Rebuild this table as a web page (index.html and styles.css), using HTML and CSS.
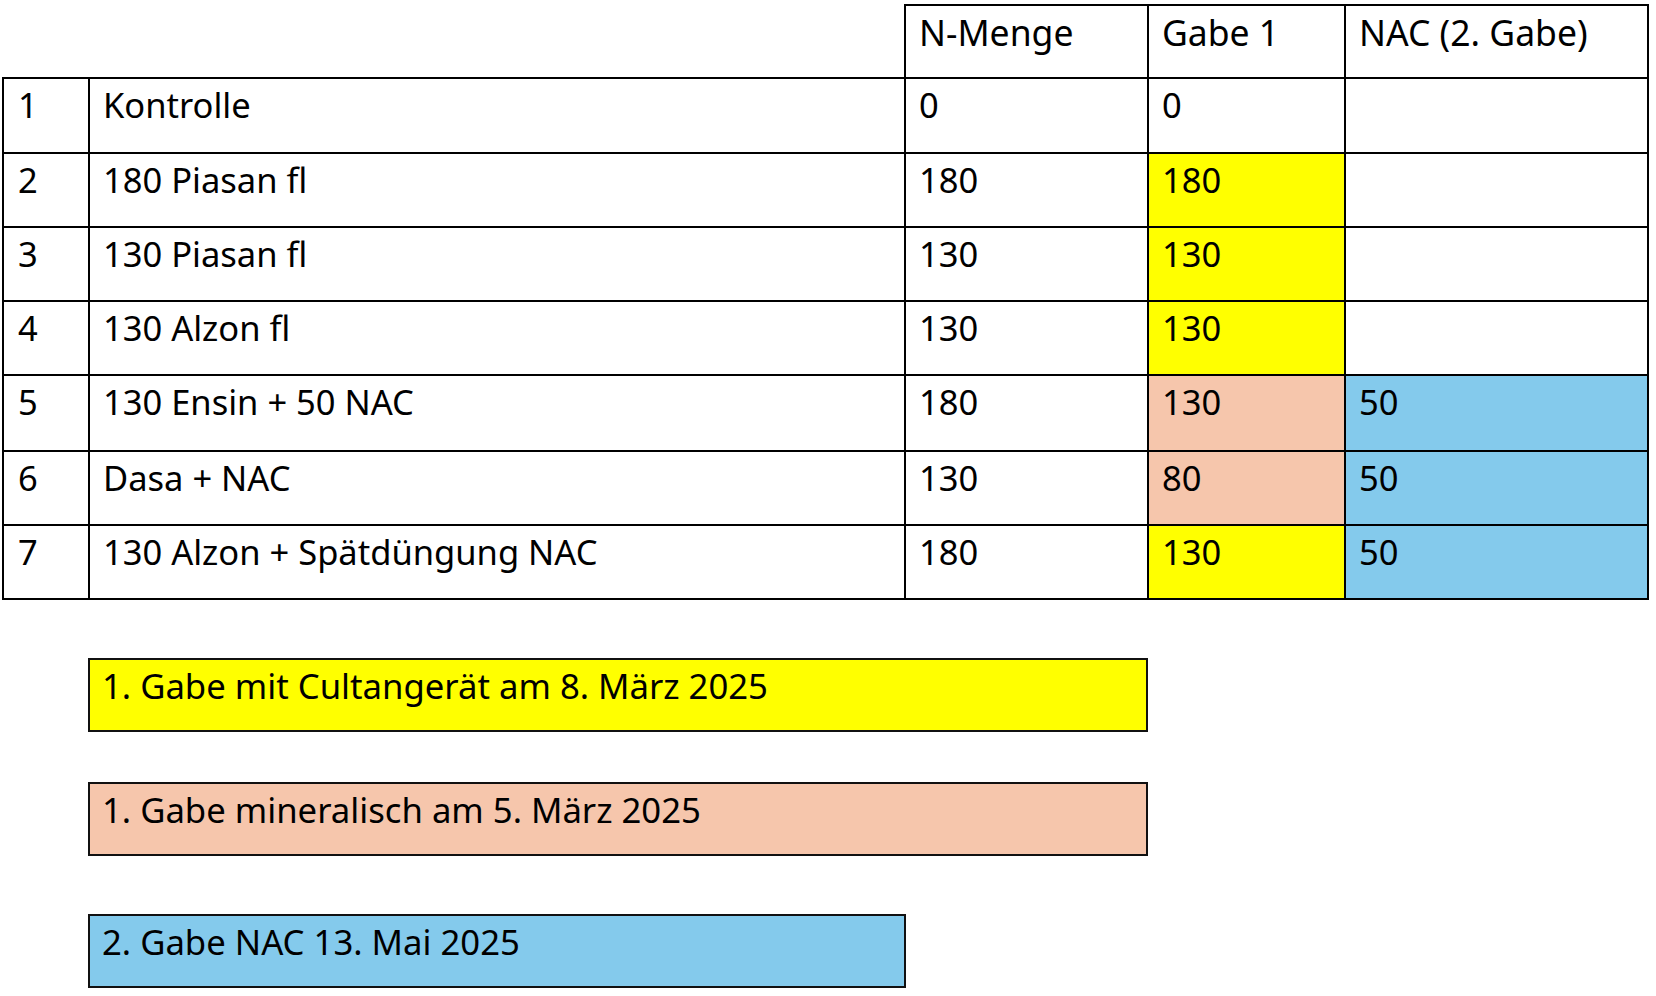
FILE: index.html
```html
<!DOCTYPE html>
<html lang="de">
<head>
<meta charset="utf-8">
<title>Düngungsversuch</title>
<link rel="stylesheet" href="styles.css">
</head>
<body>
<div class="page">
  <table class="trial">
    <colgroup>
      <col class="c-nr">
      <col class="c-name">
      <col class="c-menge">
      <col class="c-gabe">
      <col class="c-nac">
    </colgroup>
    <thead>
      <tr>
        <th class="blank"></th>
        <th class="blank"></th>
        <th>N-Menge</th>
        <th>Gabe 1</th>
        <th>NAC (2. Gabe)</th>
      </tr>
    </thead>
    <tbody>
      <tr class="mid"><td>1</td><td>Kontrolle</td><td>0</td><td>0</td><td></td></tr>
      <tr><td>2</td><td>180 Piasan fl</td><td>180</td><td class="yellow">180</td><td></td></tr>
      <tr><td>3</td><td>130 Piasan fl</td><td>130</td><td class="yellow">130</td><td></td></tr>
      <tr><td>4</td><td>130 Alzon fl</td><td>130</td><td class="yellow">130</td><td></td></tr>
      <tr class="tall"><td>5</td><td>130 Ensin + 50 NAC</td><td>180</td><td class="peach">130</td><td class="blue">50</td></tr>
      <tr><td>6</td><td>Dasa + NAC</td><td>130</td><td class="peach">80</td><td class="blue">50</td></tr>
      <tr><td>7</td><td>130 Alzon + Spätdüngung NAC</td><td>180</td><td class="yellow">130</td><td class="blue">50</td></tr>
    </tbody>
  </table>

  <div class="legend">
    <div class="legend-box yellow wide first">1. Gabe mit Cultangerät am 8. März 2025</div>
    <div class="legend-box peach wide second">1. Gabe mineralisch am 5. März 2025</div>
    <div class="legend-box blue narrow third">2. Gabe NAC 13. Mai 2025</div>
  </div>
</div>
</body>
</html>
```

FILE: styles.css
```css
html, body {
  margin: 0;
  padding: 0;
  background: #ffffff;
}

body {
  font-family: "Noto Sans", "Open Sans", "Liberation Sans", sans-serif;
  font-size: 34.5px;
  line-height: 40px;
  color: #000000;
}

.page {
  padding: 4px 0 0 2px;
}

.trial {
  border-collapse: collapse;
  table-layout: fixed;
  width: 1645px;
}

.c-nr { width: 86px; }
.c-name { width: 816px; }
.c-menge { width: 243px; }
.c-gabe { width: 197px; }
.c-nac { width: 303px; }

.trial th,
.trial td {
  border: 2px solid #000000;
  padding: 6px 10px 0 13px;
  vertical-align: top;
  text-align: left;
  font-weight: normal;
  height: 74px;
  box-sizing: border-box;
  white-space: nowrap;
}

.trial tr.mid td {
  height: 75px;
}

.trial tr.tall td {
  height: 76px;
}

.trial thead th {
  height: 73px;
  padding-left: 13px;
  font-size: 35.5px;
}

.trial th.blank {
  border-top: none;
  border-left: none;
  border-right: none;
}

.trial tbody td:first-child {
  padding-left: 14px;
}

.yellow { background: #ffff00; }
.peach { background: #f6c6ac; }
.blue { background: #84caec; }

.legend {
  display: flex;
  flex-direction: column;
  align-items: flex-start;
  padding-left: 86px;
}

.legend-box {
  box-sizing: border-box;
  height: 74px;
  border: 2px solid #111111;
  padding: 6px 10px 0 12px;
  white-space: nowrap;
  font-size: 34.7px;
}

.legend-box.wide { width: 1060px; }
.legend-box.narrow { width: 818px; }

.legend-box.first { margin-top: 58px; }
.legend-box.second { margin-top: 50px; }
.legend-box.third { margin-top: 58px; }
```
